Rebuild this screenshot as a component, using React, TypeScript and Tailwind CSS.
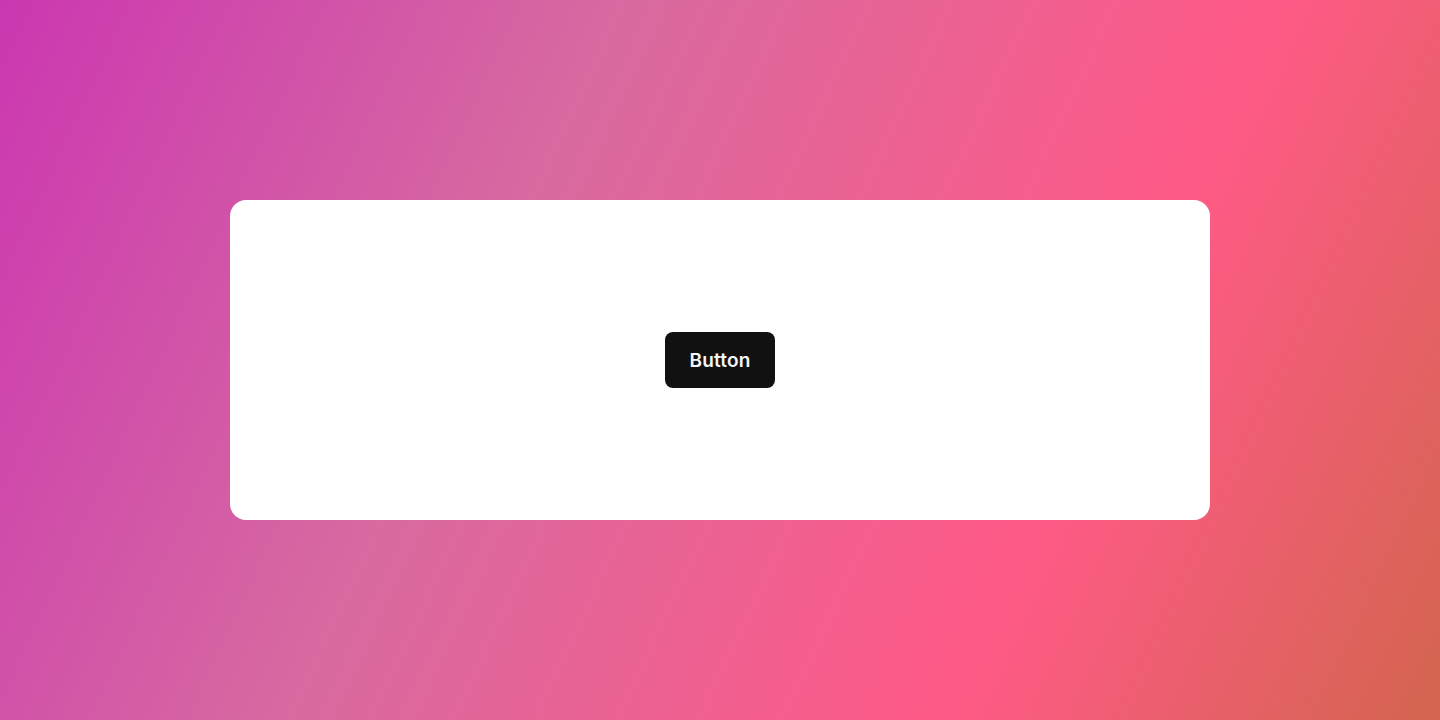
export default function App() {
    return (
        <div className="flex h-[720px] w-full items-center justify-center bg-[linear-gradient(115deg,#cb37b1_0%,#d76aa0_35%,#ff5a87_72%,#d3654e_100%)]">
            <div className="flex h-[320px] w-[980px] items-center justify-center rounded-2xl bg-white">
                <button
                    type="button"
                    className="h-14 w-[110px] rounded-lg bg-[#111111] pt-[3px] font-['Inter',sans-serif] text-[19px] font-semibold tracking-[0.2px] text-[#f5f5f5]"
                >
                    Button
                </button>
            </div>
        </div>
    );
}
